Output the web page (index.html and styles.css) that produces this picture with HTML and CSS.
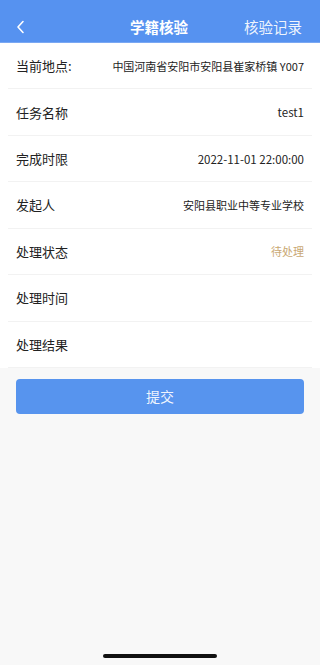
FILE: index.html
```html
<!DOCTYPE html>
<html lang="zh">
<head>
<meta charset="utf-8">
<title>学籍核验</title>
<link rel="stylesheet" href="styles.css">
</head>
<body>
<div class="page">
  <header class="nav">
    <span class="back">
      <svg width="10" height="14" viewBox="0 0 10 14"><polyline points="7,1.5 2,7 7,12.5" fill="none" stroke="#fff" stroke-width="1.6" stroke-linecap="round" stroke-linejoin="round"/></svg>
    </span>
    <span class="title">学籍核验</span>
    <span class="action">核验记录</span>
  </header>
  <section class="list">
    <div class="row"><span class="label">当前地点:</span><span class="value">中国河南省安阳市安阳县崔家桥镇 Y007</span></div>
    <div class="row"><span class="label">任务名称</span><span class="value latin">test1</span></div>
    <div class="row"><span class="label">完成时限</span><span class="value latin">2022-11-01 22:00:00</span></div>
    <div class="row"><span class="label">发起人</span><span class="value">安阳县职业中等专业学校</span></div>
    <div class="row"><span class="label">处理状态</span><span class="value status">待处理</span></div>
    <div class="row"><span class="label">处理时间</span><span class="value"></span></div>
    <div class="row"><span class="label">处理结果</span><span class="value"></span></div>
  </section>
  <div class="actions">
    <button class="submit">提交</button>
  </div>
  <div class="home-indicator"></div>
</div>
</body>
</html>
```
FILE: styles.css
```css
* { box-sizing: border-box; }
html, body {
  margin: 0;
  padding: 0;
  background: #f8f8f8;
  font-family: "Noto Sans CJK SC", "Noto Sans", sans-serif;
}
.page {
  position: relative;
  width: 320px;
  height: 665px;
  background: #f8f8f8;
}
.nav {
  height: 43px;
  background: #5692f0;
  border-bottom: 1px solid #7aa8f3;
  padding: 12px 18px 0 16px;
  display: grid;
  grid-template-columns: 70px 1fr 70px;
  align-items: center;
  color: #fff;
}
.back {
  display: flex;
  align-items: center;
  height: 30px;
}
.title {
  text-align: center;
  font-size: 14.5px;
  font-weight: bold;
  line-height: 30px;
}
.action {
  text-align: right;
  font-size: 14.5px;
  line-height: 30px;
  color: rgba(255,255,255,0.92);
}
.list {
  background: #fff;
  padding: 0 8px;
}
.row {
  height: 46.43px;
  border-bottom: 1px solid #f2f2f2;
  padding: 0 8px;
  display: flex;
  align-items: center;
  justify-content: space-between;
}
.label {
  font-size: 13px;
  color: #222;
}
.value {
  font-size: 11px;
  color: #222;
}
.value.latin {
  font-size: 11.5px;
}
.value.status {
  color: #c9a873;
}
.actions {
  padding: 11px 16px 0;
}
.submit {
  width: 100%;
  height: 35px;
  border: none;
  border-radius: 4px;
  background: #5794ee;
  color: rgba(255,255,255,0.92);
  font-family: "Noto Sans CJK SC", sans-serif;
  font-size: 14px;
  padding: 0;
}
.home-indicator {
  position: absolute;
  left: 103px;
  bottom: 7px;
  width: 114px;
  height: 4px;
  border-radius: 2px;
  background: #111;
}
```
